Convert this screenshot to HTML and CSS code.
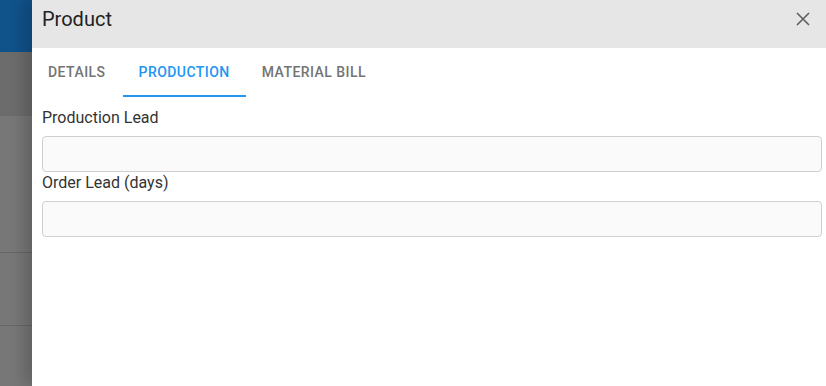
FILE: index.html
```html
<!DOCTYPE html>
<html>
<head>
<meta charset="utf-8">
<link rel="stylesheet" href="styles.css">
</head>
<body>
<div class="page">
  <div class="backdrop">
    <div class="bd-top"></div>
    <div class="bd-band"></div>
    <div class="bd-row bd-row1"></div>
    <div class="bd-row bd-row2"></div>
    <div class="bd-rest"></div>
  </div>
  <div class="drawer">
    <div class="drawer-header">
      <h1 class="drawer-title">Product</h1>
      <button class="close-btn" aria-label="Close">
        <svg width="14" height="14" viewBox="0 0 14 14"><path d="M1 1L13 13M13 1L1 13" stroke="#5f5f5f" stroke-width="1.6" fill="none"/></svg>
      </button>
    </div>
    <div class="tabs">
      <div class="tab">Details</div>
      <div class="tab active">Production</div>
      <div class="tab">Material Bill</div>
    </div>
    <div class="form">
      <label class="field-label">Production Lead</label>
      <input class="field-input" type="text">
      <label class="field-label">Order Lead (days)</label>
      <input class="field-input" type="text">
    </div>
  </div>
</div>
</body>
</html>
```
FILE: styles.css
```css
* { box-sizing: border-box; }
html, body { margin: 0; padding: 0; }
body {
  width: 826px;
  height: 386px;
  overflow: hidden;
  font-family: Roboto, "Liberation Sans", sans-serif;
  background: #fff;
}
.page {
  display: flex;
  height: 386px;
}
.backdrop {
  width: 32px;
  flex: none;
  display: flex;
  flex-direction: column;
  background: #767676;
}
.bd-top { height: 52px; background: #10528a; }
.bd-band { height: 64px; background: #6c6c6c; }
.bd-row1 { height: 137px; border-bottom: 1px solid #676767; background: #777; }
.bd-row2 { height: 73px; border-bottom: 1px solid #676767; background: #777; }
.bd-rest { flex: 1; background: #777; }
.drawer {
  flex: 1;
  background: #fff;
  box-shadow: -8px 0 14px rgba(0,0,0,0.18);
  display: flex;
  flex-direction: column;
}
.drawer-header {
  height: 48px;
  background: #e6e6e6;
  display: flex;
  align-items: center;
  justify-content: space-between;
  padding: 0 16px 0 10px;
}
.drawer-title {
  margin: 0;
  font-size: 20px;
  font-weight: 400;
  color: #212121;
  position: relative;
  top: -5px;
}
.close-btn {
  border: 0;
  background: none;
  padding: 0;
  width: 14px;
  height: 14px;
  display: flex;
  position: relative;
  top: -5px;
}
.tabs {
  display: flex;
  height: 49px;
}
.tab {
  padding: 1px 16px 0 16px;
  display: flex;
  align-items: center;
  font-size: 14px;
  font-weight: 500;
  letter-spacing: 0.45px;
  text-transform: uppercase;
  color: #747474;
  border-bottom: 2px solid transparent;
}
.tab.active {
  color: #2196f3;
  border-bottom-color: #2196f3;
}
.tabs .tab:first-child { padding-right: 17px; }
.form {
  display: flex;
  flex-direction: column;
  padding: 10px 4px 0 10px;
}
.field-label {
  font-size: 16px;
  color: #333;
  line-height: 22px;
  margin-bottom: 7px;
}
.field-input {
  height: 36px;
  border: 1px solid #cfcfcf;
  border-radius: 4px;
  background: #fafafa;
  margin: 0;
  font: inherit;
}
```
